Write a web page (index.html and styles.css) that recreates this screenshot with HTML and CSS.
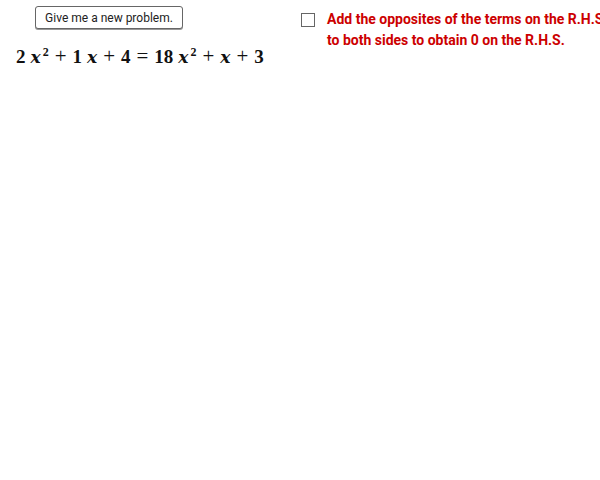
FILE: index.html
```html
<!DOCTYPE html>
<html>
<head>
<meta charset="utf-8">
<link rel="stylesheet" href="styles.css">
</head>
<body>
<div class="canvas">
  <button class="btn">Give me a new problem.</button>
  <div class="eq"><b class="co">2</b><i>x</i><sup>2</sup><span class="op">+</span><b class="co">1</b><i>x</i><span class="op">+</span><b>4</b><span class="op">=</span><b class="co">18</b><i>x</i><sup>2</sup><span class="op">+</span><i>x</i><span class="op">+</span><b>3</b></div>
  <label class="check">
    <span class="box"></span>
    <span class="ctext">Add the opposites of the terms on the R.H.S<br>to both sides to obtain 0 on the R.H.S.</span>
  </label>
</div>
</body>
</html>
```
FILE: styles.css
```css
html, body { margin: 0; padding: 0; background: #fff; }
.canvas { position: relative; width: 600px; height: 480px; overflow: hidden; }
.btn {
  position: absolute; left: 35px; top: 6px; width: 148px; height: 23px;
  margin: 0; padding: 0; background: #fff; border: 1px solid #666; border-radius: 3px;
  box-shadow: 0 1px 0 #999;
  font-family: Roboto, sans-serif; font-size: 12px; color: #222;
}
.eq {
  position: absolute; left: 16px; top: 44px; white-space: nowrap;
  font-family: "Liberation Serif", serif; font-size: 19px; color: #111;
}
.eq b { font-weight: bold; }
.eq .co { margin-right: 5px; }
.eq i { font-style: italic; font-weight: bold; font-family: "DejaVu Serif", serif; font-size: 17px; }
.eq sup { font-size: 12px; font-weight: bold; vertical-align: 7px; line-height: 0; margin-left: 2px; }
.eq .op { margin: 0 6px; font-weight: normal; font-size: 21px; }
.check { position: absolute; left: 301px; top: 9px; display: flex; align-items: flex-start; white-space: nowrap; }
.box { width: 12px; height: 12px; border: 1px solid #666; margin-top: 4px; flex: none; }
.ctext {
  margin-left: 12px; font-family: Roboto, sans-serif; font-size: 14px; font-weight: bold;
  color: #cc0000; line-height: 21px;
}
```
